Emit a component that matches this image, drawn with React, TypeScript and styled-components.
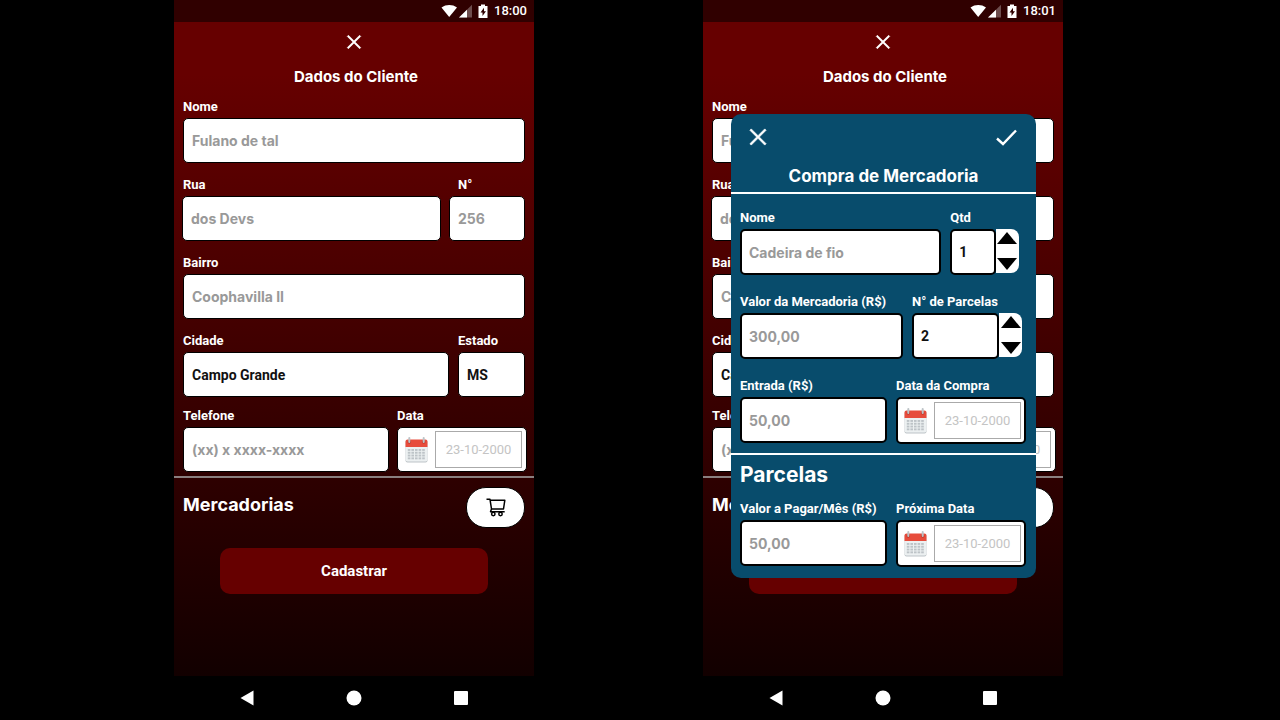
import React, { useId, useState } from "react";
import styled, { createGlobalStyle } from "styled-components";
import { AiOutlineCheck, AiOutlineClose } from "react-icons/ai";

const ui = `Roboto, "Liberation Sans", sans-serif`;
const rounded = `Inter, "Open Sans", sans-serif`;

const GlobalStyle = createGlobalStyle`
  *, *::before, *::after { box-sizing: border-box; }
  body { margin: 0; background: #000; font-family: ${ui}; }
  button, input, select { font: inherit; margin: 0; }
  h1, h2 { margin: 0; }
`;

const Stage = styled.main`
  display: grid;
  grid-template-columns: 174fr 360fr 169fr 360fr 217fr;
  min-height: 100vh;
  background: #000;
`;

const Phone = styled.section<{ $column: number }>`
  grid-column: ${(p) => p.$column};
  position: relative;
  display: flex;
  flex-direction: column;
  min-width: 0;
`;

const StatusBar = styled.header`
  display: flex;
  align-items: center;
  justify-content: flex-end;
  height: 22px;
  padding-right: 7px;
  background: #300000;
  color: #fff;
  font-size: 13px;
  font-weight: 500;
  line-height: 22px;
`;

const StatusIcons = styled.svg`
  width: 48px;
  height: 14px;
  margin-right: 5px;
`;

const Screen = styled.div`
  flex: 1;
  display: flex;
  flex-direction: column;
  background: linear-gradient(#660000 8%, #120000 100%);
  color: #fff;
`;

const IconButton = styled.button`
  display: flex;
  padding: 0;
  border: 0;
  background: none;
  color: #fff;
  cursor: pointer;
`;

const ScreenHeader = styled.div`
  display: flex;
  flex-direction: column;
  align-items: center;
  gap: 13px;
  padding-top: 10px;
`;

const ScreenTitle = styled.h1`
  padding-left: 4px;
  font: 700 15px/24px ${rounded};
`;

const Form = styled.form`
  display: flex;
  flex-direction: column;
  gap: 14px;
  padding: 10px 7px 4px 8px;
`;

const RowGroup = styled.div`
  display: flex;
  flex-direction: column;
  gap: 11px;
`;

const Row = styled.div<{ $columns: string; $gap?: number; $left?: number; $right?: number }>`
  display: grid;
  grid-template-columns: ${(p) => p.$columns};
  column-gap: ${(p) => p.$gap ?? 9}px;
  padding: 0 ${(p) => p.$right ?? 2}px 0 ${(p) => p.$left ?? 1}px;
`;

const Field = styled.div`
  display: flex;
  flex-direction: column;
  gap: 3px;
  min-width: 0;
`;

const Label = styled.label<{ $inset?: number }>`
  padding-left: ${(p) => p.$inset ?? 0}px;
  font-size: 13px;
  font-weight: 700;
  line-height: 16px;
  white-space: nowrap;
`;

const boxStyle = (modal?: boolean) => `
  width: 100%;
  min-width: 0;
  height: ${modal ? 46 : 45}px;
  border: ${modal ? 2 : 1}px solid #000;
  border-radius: 5px;
  background: #fff;
`;

const TextInput = styled.input<{ $modal?: boolean }>`
  ${(p) => boxStyle(p.$modal)}
  padding: 0 ${(p) => (p.$modal ? 7 : 8)}px;
  color: #111;
  font: 700 14px/20px ${rounded};
  &::placeholder { color: #999; opacity: 1; }
`;

const Select = styled.select`
  ${boxStyle()}
  appearance: none;
  padding: 0 8px;
  color: #111;
  font-size: 14px;
  font-weight: 700;
`;

const NumberInput = styled.input`
  ${boxStyle(true)}
  padding: 0 7px;
  color: #111;
  font-size: 14px;
  font-weight: 700;
`;

const NumberBox = styled.div`
  display: grid;
  grid-template-columns: minmax(0, 1fr) 23px;
`;

const Steps = styled.div`
  display: flex;
  flex-direction: column;
  justify-content: space-between;
  height: 44px;
  padding: 3px 1px;
  border-radius: 0 8px 8px 0;
  background: #fff;
`;

const StepButton = styled(IconButton)`
  justify-content: center;
  color: #000;
`;

const DateBox = styled.div<{ $modal?: boolean }>`
  ${(p) => boxStyle(p.$modal)}
  height: ${(p) => (p.$modal ? 47 : 45)}px;
  display: flex;
  align-items: center;
  gap: 7px;
  padding: 0 ${(p) => (p.$modal ? 3 : 4)}px 0 ${(p) => (p.$modal ? 6 : 7)}px;
`;

const DateInput = styled.input`
  flex: 1;
  min-width: 0;
  height: 37px;
  padding: 0;
  border: 1px solid #aaa;
  background: #fff;
  font-size: 13px;
  text-align: center;
  &::placeholder { color: #c4c4c4; opacity: 1; }
`;

const Goods = styled.div`
  display: flex;
  justify-content: space-between;
  border-top: 2px solid #8a8080;
  padding: 9px 9px 0;
`;

const GoodsTitle = styled.h2`
  font: 700 18px/36px ${rounded};
`;

const CartButton = styled.button`
  display: flex;
  align-items: center;
  justify-content: center;
  width: 59px;
  height: 41px;
  padding: 0;
  border: 1px solid #000;
  border-radius: 20px;
  background: #fff;
  color: #000;
  cursor: pointer;
`;

const SubmitButton = styled.button`
  margin: 20px 46px 0;
  height: 46px;
  border: 0;
  border-radius: 10px;
  background: #660000;
  color: #fff;
  font-size: 15px;
  font-weight: 700;
  cursor: pointer;
`;

const NavBar = styled.nav`
  display: grid;
  grid-template-columns: repeat(3, 107px);
  justify-content: center;
  justify-items: center;
  align-items: center;
  height: 44px;
  background: #000;
`;

const Dialog = styled.div`
  position: absolute;
  top: 114px;
  left: 28px;
  right: 27px;
  padding-bottom: 11px;
  border-radius: 10px;
  background: #084c6c;
  color: #fff;
`;

const DialogBar = styled.div`
  display: flex;
  justify-content: space-between;
  padding: 11px 17px 0 15px;
`;

const DialogTitle = styled.h2`
  padding: 13px 0 3px;
  border-bottom: 2px solid #fff;
  text-align: center;
  font: 700 17px/26px ${rounded};
`;

const DialogRows = styled.div`
  display: flex;
  flex-direction: column;
  gap: 19px;
  padding: 16px 10px 9px 9px;
  border-bottom: 2px solid #fff;
`;

const Installments = styled.div`
  padding: 6px 10px 0 9px;
`;

const InstallmentsTitle = styled.h2`
  margin-bottom: 12px;
  font: 700 21px/28px ${rounded};
`;

function CalendarIcon() {
  const dots = [];
  for (let r = 0; r < 4; r++)
    for (let c = 0; c < 5; c++)
      dots.push(<rect key={`${r}-${c}`} x={2.8 + c * 3.6} y={12 + r * 2.8} width="2.6" height="1.9" fill="#bdc3c7" />);
  return (
    <svg width="23" height="26" viewBox="0 0 23 26" aria-hidden="true">
      <rect x="0.5" y="3" width="22" height="22.5" rx="2" fill="#bdc3c7" />
      <rect x="0.5" y="3" width="22" height="21.5" rx="2" fill="#ecf0f1" />
      <path d="M2.5 2.5h18a2 2 0 0 1 2 2V10H.5V4.500a2 2 0 0 1 2-2z" fill="#e74c3c" />
      <circle cx="4.300" cy="5" r="1.800" fill="#c0392b" />
      <circle cx="18.700" cy="5" r="1.800" fill="#c0392b" />
      <rect x="3.300" y="0" width="2" height="6" rx="1" fill="#bdc3c7" />
      <rect x="17.700" y="0" width="2" height="6" rx="1" fill="#bdc3c7" />
      {dots}
    </svg>
  );
}

function CartIcon() {
  return (
    <svg width="20" height="19" viewBox="0 0 20 19" fill="none" stroke="currentColor" strokeWidth="1.5" strokeLinejoin="round" aria-hidden="true">
      <path d="M.5 1.300H4l1.500 9.700h12L18.800 2.300H4.300M5.500 11l-1 2.700h14.200" />
      <circle cx="7.300" cy="16" r="1.700" />
      <circle cx="14.500" cy="16" r="1.700" />
    </svg>
  );
}

type FieldProps = { label: string; inset?: number; modal?: boolean };

function TextField({ label, inset, modal, placeholder }: FieldProps & { placeholder: string }) {
  const id = useId();
  return (
    <Field>
      <Label htmlFor={id} $inset={inset}>{label}</Label>
      <TextInput id={id} $modal={modal} placeholder={placeholder} />
    </Field>
  );
}

function SelectField({ label, options }: FieldProps & { options: string[] }) {
  const id = useId();
  return (
    <Field>
      <Label htmlFor={id}>{label}</Label>
      <Select id={id}>
        {options.map((o) => <option key={o}>{o}</option>)}
      </Select>
    </Field>
  );
}

function DateField({ label, modal }: FieldProps) {
  const id = useId();
  return (
    <Field>
      <Label htmlFor={id}>{label}</Label>
      <DateBox $modal={modal}>
        <CalendarIcon />
        <DateInput id={id} placeholder="23-10-2000" />
      </DateBox>
    </Field>
  );
}

function NumberField({ label, initial }: { label: string; initial: number }) {
  const id = useId();
  const [value, setValue] = useState(initial);
  return (
    <Field>
      <Label htmlFor={id}>{label}</Label>
      <NumberBox>
        <NumberInput
          id={id}
          inputMode="numeric"
          value={value}
          onChange={(e) => setValue(Number(e.target.value) || 0)}
        />
        <Steps>
          <StepButton type="button" aria-label="Aumentar" onClick={() => setValue(value + 1)}>
            <svg width="20" height="12" viewBox="0 0 20 12"><path d="M10 0l10 12H0z" /></svg>
          </StepButton>
          <StepButton type="button" aria-label="Diminuir" onClick={() => setValue(Math.max(1, value - 1))}>
            <svg width="20" height="12" viewBox="0 0 20 12"><path d="M10 12L0 0h20z" /></svg>
          </StepButton>
        </Steps>
      </NumberBox>
    </Field>
  );
}

function PurchaseDialog() {
  return (
    <Dialog role="dialog" aria-label="Compra de Mercadoria">
      <DialogBar>
        <IconButton type="button" aria-label="Fechar"><AiOutlineClose size={24} strokeWidth={30} /></IconButton>
        <IconButton type="button" aria-label="Confirmar">
          <svg width="25" height="25" viewBox="0 0 25 25" fill="none" stroke="currentColor" strokeWidth="2.4">
            <path d="M3 13.500l6 5.500L22 5.500" />
          </svg>
        </IconButton>
      </DialogBar>
      <DialogTitle>Compra de Mercadoria</DialogTitle>
      <DialogRows>
        <Row $columns="202fr 69fr" $left={0} $right={7}>
          <TextField modal label="Nome" placeholder="Cadeira de fio" />
          <NumberField label="Qtd" initial={1} />
        </Row>
        <Row $columns="163fr 110fr" $left={0} $right={4}>
          <TextField modal label="Valor da Mercadoria (R$)" placeholder="300,00" />
          <NumberField label="N° de Parcelas" initial={2} />
        </Row>
        <Row $columns="147fr 130fr" $left={0} $right={0}>
          <TextField modal label="Entrada (R$)" placeholder="50,00" />
          <DateField modal label="Data da Compra" />
        </Row>
      </DialogRows>
      <Installments>
        <InstallmentsTitle>Parcelas</InstallmentsTitle>
        <Row $columns="147fr 130fr" $left={0} $right={0}>
          <TextField modal label="Valor a Pagar/Mês (R$)" placeholder="50,00" />
          <DateField modal label="Próxima Data" />
        </Row>
      </Installments>
    </Dialog>
  );
}

function PhoneScreen({ column, time, children }: { column: number; time: string; children?: React.ReactNode }) {
  return (
    <Phone $column={column}>
      <StatusBar>
        <StatusIcons viewBox="0 0 48 14" aria-hidden="true">
          <path d="M0.500 3.500C5 .2 11.500 .2 16 3.500L8.200 13z" fill="#fff" />
          <path d="M18 13.500L31 .8v12.700z" fill="#fff" opacity="0.300" />
          <path d="M18 13.500l8-7.800v7.800z" fill="#fff" />
          <path d="M40 .5h4V2h2.500v12h-9V2H40z" fill="#fff" />
          <path d="M43 3.800L39.500 8.600h2V12L45 7.300h-2z" fill="#300000" />
        </StatusIcons>
        <time>{time}</time>
      </StatusBar>
      <Screen>
        <ScreenHeader>
          <IconButton type="button" aria-label="Fechar"><AiOutlineClose size={20} strokeWidth={30} /></IconButton>
          <ScreenTitle>Dados do Cliente</ScreenTitle>
        </ScreenHeader>
        <Form>
          <Row $columns="1fr">
            <TextField label="Nome" placeholder="Fulano de tal" />
          </Row>
          <Row $columns="259fr 76fr" $gap={8} $left={0}>
            <TextField label="Rua" inset={1} placeholder="dos Devs" />
            <TextField label="N°" inset={9} placeholder="256" />
          </Row>
          <Row $columns="1fr">
            <TextField label="Bairro" placeholder="Coophavilla II" />
          </Row>
          <RowGroup>
            <Row $columns="266fr 67fr">
              <SelectField label="Cidade" options={["Campo Grande"]} />
              <SelectField label="Estado" options={["MS"]} />
            </Row>
            <Row $columns="206fr 130fr" $gap={8} $right={0}>
              <TextField label="Telefone" placeholder="(xx) x xxxx-xxxx" />
              <DateField label="Data" />
            </Row>
          </RowGroup>
        </Form>
        <Goods>
          <GoodsTitle>Mercadorias</GoodsTitle>
          <CartButton type="button" aria-label="Mercadorias"><CartIcon /></CartButton>
        </Goods>
        <SubmitButton type="button">Cadastrar</SubmitButton>
      </Screen>
      <NavBar>
        <IconButton type="button" aria-label="Voltar">
          <svg width="14" height="16" viewBox="0 0 14 16"><path d="M13.500 .5v15L.5 8z" fill="#fff" /></svg>
        </IconButton>
        <IconButton type="button" aria-label="Início">
          <svg width="16" height="16" viewBox="0 0 16 16"><circle cx="8" cy="8" r="7.500" fill="#fff" /></svg>
        </IconButton>
        <IconButton type="button" aria-label="Recentes">
          <svg width="14" height="14" viewBox="0 0 14 14"><rect width="14" height="14" rx="1" fill="#fff" /></svg>
        </IconButton>
      </NavBar>
      {children}
    </Phone>
  );
}

export default function App() {
  return (
    <>
      <GlobalStyle />
      <Stage>
        <PhoneScreen column={2} time="18:00" />
        <PhoneScreen column={4} time="18:01">
          <PurchaseDialog />
        </PhoneScreen>
      </Stage>
    </>
  );
}
